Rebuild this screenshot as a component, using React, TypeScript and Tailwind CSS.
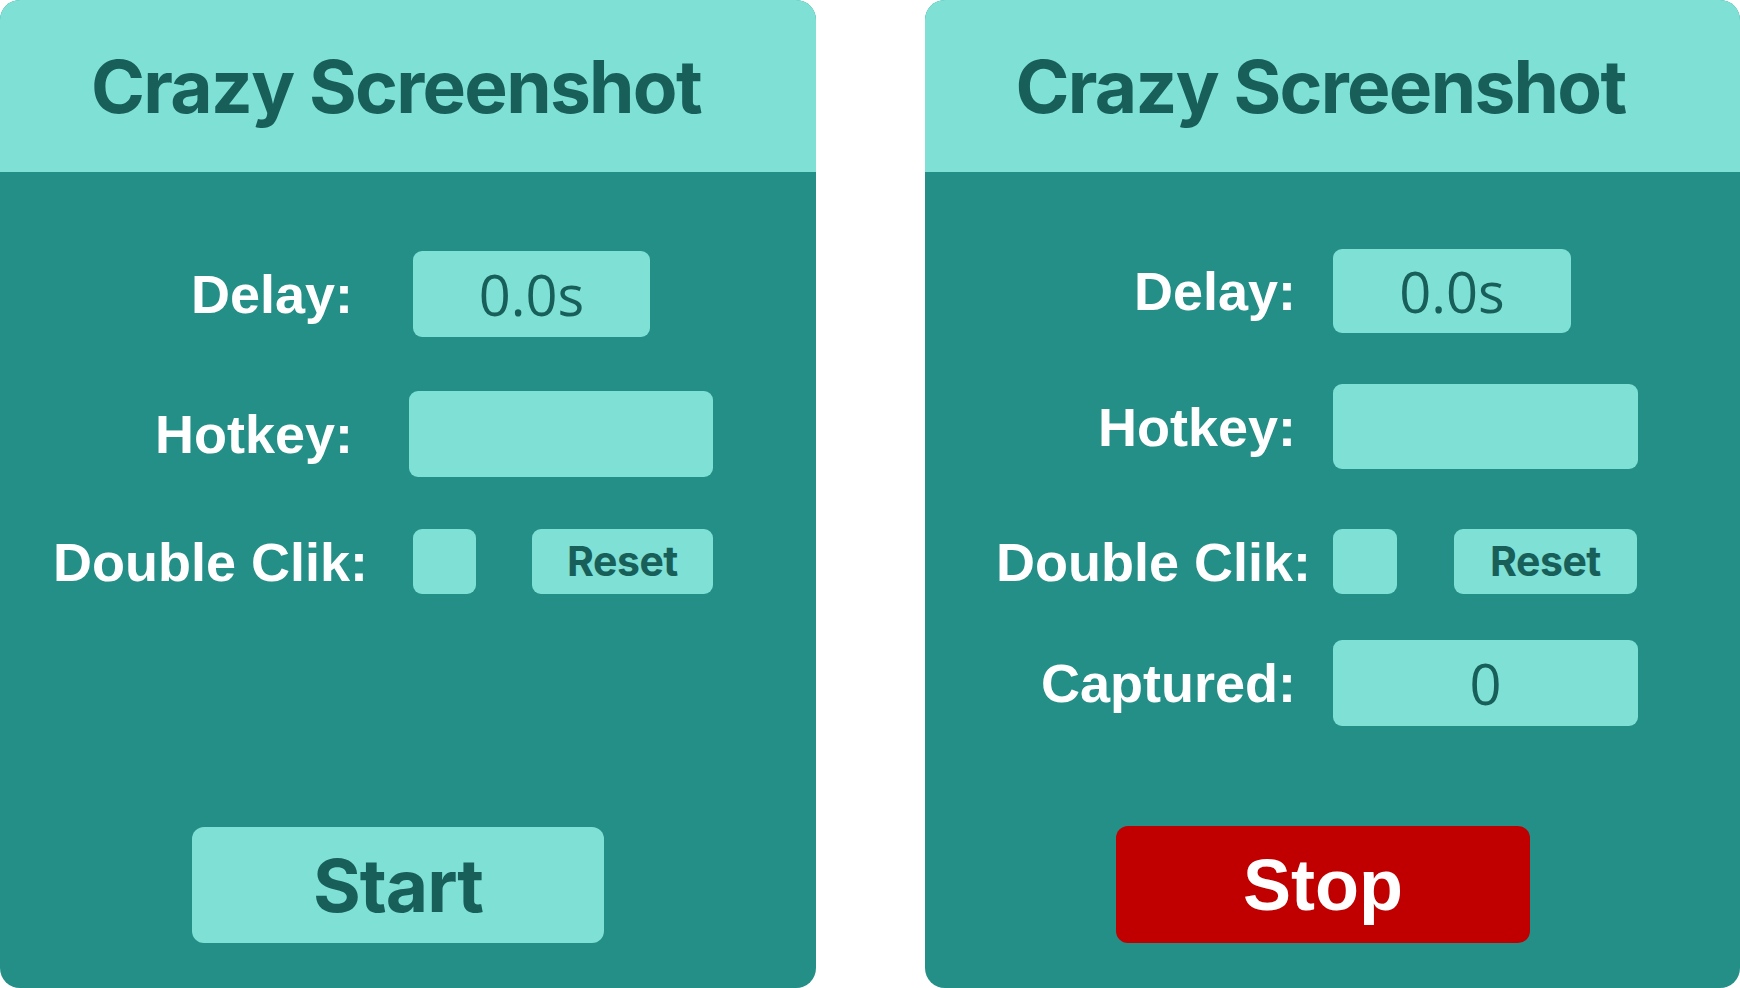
import { ReactNode } from 'react';

// Shared look for the light teal boxes
const box = "bg-[#7fe0d6] rounded-[9px]";
const labelFont = "font-['Liberation_Sans',Arial,sans-serif] font-bold text-white text-[54px] leading-none";
const titleFont = "font-['Inter',sans-serif] font-bold text-[#185f5a]";

type RowProps = {
  label: string,
  labelWidth: string,
  children: ReactNode,
  className?: string
}

const Row = ({ label, labelWidth, children, className = "" }: RowProps) => (
  <div className={`flex items-center ${className}`}>
    <div className={`${labelWidth} shrink-0 text-right ${labelFont}`}>{label}</div>
    {children}
  </div>
);

const Header = () => (
  <div className="h-[172px] shrink-0 bg-[#7fe0d6] flex items-center justify-center pr-6">
    <h1 className={`${titleFont} text-[73px] leading-none tracking-[-1.7px]`}>Crazy Screenshot</h1>
  </div>
);

const ValueBox = ({ value, className }: { value: string, className: string }) => (
  <div className={`${box} ${className} flex items-center justify-center font-['Open_Sans',sans-serif] text-[56px] leading-none text-[#185f5a]`}>
    {value}
  </div>
);

const ResetButton = ({ className }: { className: string }) => (
  <button className={`${box} ${className} h-[65px] flex items-center justify-center ${titleFont} text-[41px] leading-none tracking-[-0.5px]`}>
    Reset
  </button>
);

const IdlePanel = () => (
  <div className="w-[816px] h-[988px] rounded-[20px] overflow-hidden flex flex-col bg-[#248f87]">
    <Header />
    <div className="flex flex-col">
      <Row label="Delay:" labelWidth="w-[353px]" className="mt-[79px]">
        <ValueBox value="0.0s" className="ml-[60px] w-[237px] h-[86px]" />
      </Row>
      <Row label="Hotkey:" labelWidth="w-[353px]" className="mt-[54px]">
        <div className={`${box} ml-[56px] w-[304px] h-[86px]`} />
      </Row>
      <Row label="Double Clik:" labelWidth="w-[368px]" className="mt-[52px]">
        <div className={`${box} ml-[45px] w-[63px] h-[65px]`} />
        <ResetButton className="ml-[56px] w-[181px]" />
      </Row>
      <button className={`${box} mt-[233px] ml-[192px] w-[412px] h-[116px] rounded-[12px] flex items-center justify-center ${titleFont} text-[73px] leading-none tracking-[-1px]`}>
        Start
      </button>
    </div>
  </div>
);

const RunningPanel = () => (
  <div className="w-[815px] h-[988px] rounded-[20px] overflow-hidden flex flex-col bg-[#248f87]">
    <Header />
    <div className="flex flex-col">
      <Row label="Delay:" labelWidth="w-[371px]" className="mt-[77px]">
        <ValueBox value="0.0s" className="ml-[37px] w-[238px] h-[84px]" />
      </Row>
      <Row label="Hotkey:" labelWidth="w-[371px]" className="mt-[51px]">
        <div className={`${box} ml-[37px] w-[305px] h-[85px]`} />
      </Row>
      <Row label="Double Clik:" labelWidth="w-[386px]" className="mt-[60px]">
        <div className={`${box} ml-[22px] w-[64px] h-[65px]`} />
        <ResetButton className="ml-[57px] w-[183px]" />
      </Row>
      <Row label="Captured:" labelWidth="w-[371px]" className="mt-[46px]">
        <ValueBox value="0" className="ml-[37px] w-[305px] h-[86px]" />
      </Row>
      <button className="mt-[100px] ml-[191px] w-[414px] h-[117px] rounded-[12px] bg-[#c00000] flex items-center justify-center font-['Liberation_Sans',Arial,sans-serif] font-bold text-white text-[72px] leading-none">
        Stop
      </button>
    </div>
  </div>
);

const App = () => {
  return (
    <div className="w-[1740px] h-[988px] bg-white flex gap-[109px]">
      <IdlePanel />
      <RunningPanel />
    </div>
  );
};

export default App;
